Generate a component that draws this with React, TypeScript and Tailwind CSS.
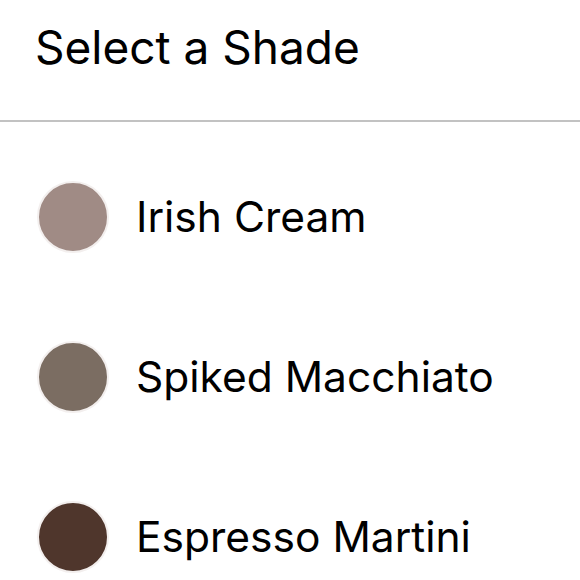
const shades = [
  { name: "Irish Cream", color: "bg-[#a08b85]" },
  { name: "Spiked Macchiato", color: "bg-[#7b6d62]" },
  { name: "Espresso Martini", color: "bg-[#4f362c]" },
];

export default function App() {
  return (
    <div className="w-[580px] h-[580px] overflow-hidden bg-white text-black font-['Inter','Liberation_Sans',sans-serif]">
      <div className="h-[122px] border-b-2 border-[#c2c2c2] pl-[35px] pt-[19px]">
        <h1 className="text-[46px] leading-[56px] font-normal">Select a Shade</h1>
      </div>
      <ul className="pt-[15px]">
        {shades.map((shade) => (
          <li key={shade.name} className="h-[160px] flex items-center pl-[37px] gap-[27px]">
            <span
              className={`w-[72px] h-[72px] shrink-0 rounded-full border-2 border-[#f3efee] ${shade.color}`}
            />
            <span className="text-[42.5px] leading-none">{shade.name}</span>
          </li>
        ))}
      </ul>
    </div>
  );
}
